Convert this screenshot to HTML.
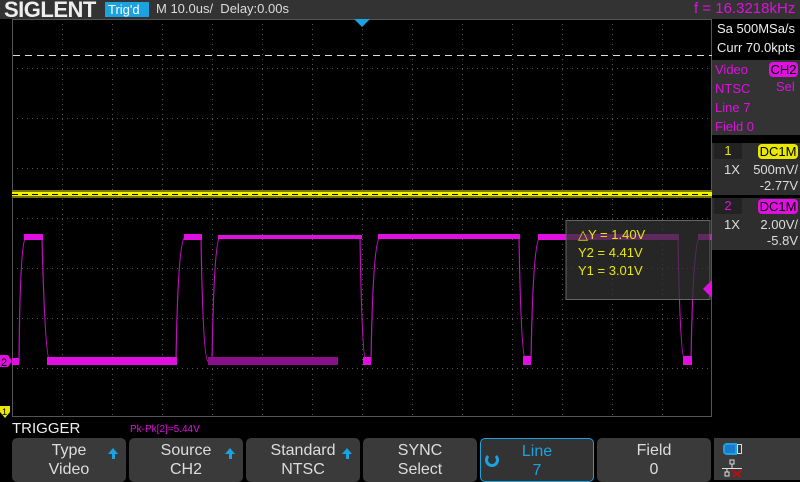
<!DOCTYPE html>
<html><head><style>
*{margin:0;padding:0;box-sizing:border-box}
body{width:800px;height:480px;background:#000;overflow:hidden;position:relative;font-family:"Liberation Sans",sans-serif;color:#fff}
.a{position:absolute}
.btn{position:absolute;top:438px;height:44px;width:114px;background:#3a3a3a;border-radius:5px;text-align:center;font-size:16px;line-height:19px;padding-top:3px;color:#ddd}
.up{position:absolute;right:8px;top:10px;width:0;height:0;border-left:5px solid transparent;border-right:5px solid transparent;border-bottom:6px solid #1aa3e0}
.up:after{content:"";position:absolute;left:-1.5px;top:6px;width:3px;height:5px;background:#1aa3e0}
</style></head><body>
<div class="a" style="left:0;top:0;width:800px;height:19px;background:#333"></div>
<div class="a" style="left:4px;top:-3px;font-size:22px;font-weight:bold;letter-spacing:-0.5px;color:#eee">SIGLENT</div>
<div class="a" style="left:105px;top:2px;width:44px;height:15px;background:#1aa3e0;color:#fff;font-size:13px;line-height:15px;padding-left:3px">Trig'd</div>
<div class="a" style="left:156px;top:1px;font-size:13px;color:#ddd">M 10.0us/&nbsp; Delay:0.00s</div>
<div class="a" style="left:694px;top:0px;font-size:15px;color:#e010e0">f = 16.3218kHz</div>

<svg class="a" style="left:0;top:0" width="800" height="480">
<g stroke="#555" stroke-width="1" stroke-dasharray="1,4">
<line x1="62.5" y1="19" x2="62.5" y2="417"/><line x1="112.5" y1="19" x2="112.5" y2="417"/><line x1="162.5" y1="19" x2="162.5" y2="417"/><line x1="212.5" y1="19" x2="212.5" y2="417"/><line x1="262.5" y1="19" x2="262.5" y2="417"/><line x1="312.5" y1="19" x2="312.5" y2="417"/><line x1="362.5" y1="19" x2="362.5" y2="417"/><line x1="412.5" y1="19" x2="412.5" y2="417"/><line x1="462.5" y1="19" x2="462.5" y2="417"/><line x1="512.5" y1="19" x2="512.5" y2="417"/><line x1="562.5" y1="19" x2="562.5" y2="417"/><line x1="612.5" y1="19" x2="612.5" y2="417"/><line x1="662.5" y1="19" x2="662.5" y2="417"/>
<line x1="12" y1="68.5" x2="712" y2="68.5"/><line x1="12" y1="118.5" x2="712" y2="118.5"/><line x1="12" y1="168.5" x2="712" y2="168.5"/><line x1="12" y1="218.5" x2="712" y2="218.5"/><line x1="12" y1="268.5" x2="712" y2="268.5"/><line x1="12" y1="318.5" x2="712" y2="318.5"/><line x1="12" y1="368.5" x2="712" y2="368.5"/>
</g>
<rect x="12.5" y="19.5" width="699" height="397" fill="none" stroke="#555"/>
<line x1="13" y1="55.5" x2="712" y2="55.5" stroke="#ddd" stroke-dasharray="7,5"/>
<polygon points="354,19 370,19 362,27" fill="#1aa3e0"/>
<rect x="12" y="190" width="700" height="8" fill="#7a7a00"/>
<rect x="12" y="192" width="700" height="4" fill="#f0f000"/>
<line x1="12" y1="194.5" x2="712" y2="194.5" stroke="#000" stroke-dasharray="6,4"/>
<g fill="none" stroke="#c010c0" stroke-width="1.2">
<path d="M12,362 H19 Q20,240 26,237 H42 Q45,360 50,361 H176 Q178,240 185,237 H201 Q203,360 208,361 H212 Q214,240 220,237 H360 Q362,360 366,361 H371 Q373,240 380,237 H519 Q521,360 526,361 H531 Q533,240 540,237 H678 Q680,360 685,361 H691 Q693,240 700,237 H712"/>
</g>
<g fill="#e010e0">
<rect x="12" y="358" width="7" height="7"/><rect x="24" y="234" width="19" height="6"/>
<rect x="47" y="357" width="130" height="8"/>
<rect x="184" y="234" width="18" height="6"/>
<rect x="218" y="235" width="144" height="4"/>
<rect x="363" y="357" width="8" height="8"/>
<rect x="378" y="234" width="142" height="5"/>
<rect x="523" y="356" width="8" height="9"/>
<rect x="538" y="234" width="141" height="6"/>
<rect x="683" y="356" width="9" height="9"/>
<rect x="698" y="234" width="14" height="6"/>
</g>
<rect x="208" y="357" width="130" height="8" fill="#8a108a"/>
<polygon points="0,355 8,355 12,361 8,367 0,367" fill="#e010e0"/>
<text x="1" y="366" font-size="11" fill="#000" font-family="Liberation Sans">2</text>
<polygon points="0,406 10,406 10,412 5,418 0,412" fill="#e8e800"/>
<text x="2" y="415" font-size="9" fill="#000" font-family="Liberation Sans">1</text>
<rect x="566" y="220.5" width="144" height="79" fill="#333" fill-opacity=".75" stroke="#666"/>
<polygon points="712,280 712,298 703,289" fill="#e010e0"/>
</svg>
<div class="a" style="left:578px;top:226px;font-size:13px;line-height:18px;color:#e8e800">△Y = 1.40V<br>Y2 = 4.41V<br>Y1 = 3.01V</div>

<div class="a" style="left:713px;top:19px;width:87px;height:41px;background:#000;font-size:13px;line-height:19px;padding-left:4px;color:#eee">Sa 500MSa/s<br>Curr 70.0kpts</div>
<div class="a" style="left:712px;top:60px;width:88px;height:75px;background:#333;font-size:13px;line-height:19px;padding-left:3px;color:#e010e0">Video<br>NTSC<br>Line 7<br>Field 0</div>
<div class="a" style="left:769px;top:62px;width:29px;height:15px;background:#e010e0;border-radius:4px;color:#000;font-size:13px;line-height:15px;text-align:center">CH2</div>
<div class="a" style="left:776px;top:79px;font-size:13px;color:#e010e0">Sel</div>
<div class="a" style="left:712px;top:143px;width:88px;height:52px;background:#2e2e2e"></div>
<div class="a" style="left:714px;top:143px;width:28px;height:16px;background:#222;color:#e8e800;font-size:13px;text-align:center">1</div>
<div class="a" style="left:758px;top:144px;width:40px;height:15px;background:#e8e800;border-radius:4px;color:#000;font-size:13px;line-height:15px;text-align:center">DC1M</div>
<div class="a" style="left:724px;top:162px;font-size:13px;color:#ddd">1X</div>
<div class="a" style="left:712px;top:162px;width:86px;text-align:right;font-size:13px;line-height:16px;color:#ddd">500mV/<br>-2.77V</div>
<div class="a" style="left:712px;top:198px;width:88px;height:52px;background:#2e2e2e"></div>
<div class="a" style="left:714px;top:198px;width:28px;height:16px;background:#222;color:#e010e0;font-size:13px;text-align:center">2</div>
<div class="a" style="left:758px;top:199px;width:40px;height:15px;background:#e010e0;border-radius:4px;color:#000;font-size:13px;line-height:15px;text-align:center">DC1M</div>
<div class="a" style="left:724px;top:217px;font-size:13px;color:#ddd">1X</div>
<div class="a" style="left:712px;top:217px;width:86px;text-align:right;font-size:13px;line-height:16px;color:#ddd">2.00V/<br>-5.8V</div>

<div class="a" style="left:12px;top:420px;font-size:15px;color:#eee">TRIGGER</div>
<div class="a" style="left:130px;top:424px;font-size:10px;color:#e010e0">Pk-Pk[2]=5.44V</div>
<div class="btn" style="left:12px">Type<br>Video<div class="up"></div></div>
<div class="btn" style="left:129px">Source<br>CH2<div class="up"></div></div>
<div class="btn" style="left:246px">Standard<br>NTSC<div class="up"></div></div>
<div class="btn" style="left:363px">SYNC<br>Select</div>
<div class="btn" style="left:480px;border:1px solid #1aa3e0;color:#1aa3e0;background:#333">Line<br>7<div class="a" style="left:4px;top:14px;width:14px;height:14px;border:3px solid #1aa3e0;border-top-color:transparent;border-radius:50%"></div></div>
<div class="btn" style="left:597px">Field<br>0</div>
<div class="a" style="left:714px;top:438px;width:86px;height:42px;background:#3a3a3a"></div>
<div class="a" style="left:723px;top:443px;width:14px;height:12px;background:#1a7acc;border:2px solid #1aa3e0;border-radius:4px 0 0 4px"></div>
<div class="a" style="left:737px;top:444px;width:5px;height:10px;border:1px solid #ddd"></div>
<svg class="a" style="left:720px;top:459px" width="24" height="18"><g fill="none" stroke="#ddd"><rect x="10" y="1" width="4" height="4"/><line x1="12" y1="5" x2="12" y2="9"/><line x1="2" y1="9.5" x2="22" y2="9.5"/><rect x="5" y="13" width="4" height="4"/><line x1="7" y1="10" x2="7" y2="13"/></g><path d="M12,11 L22,19 M22,11 L12,19" stroke="#d00" stroke-width="1.5"/></svg>
</body></html>
